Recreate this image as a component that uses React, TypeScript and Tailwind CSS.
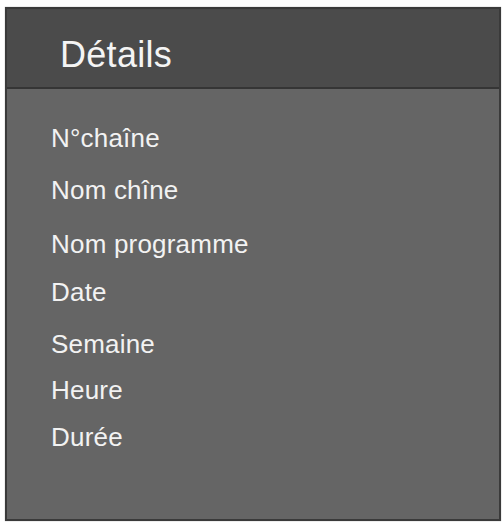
import React from "react";

const fields = [
  { label: "N°chaîne", gap: "mt-0" },
  { label: "Nom chîne", gap: "mt-[24px]" },
  { label: "Nom programme", gap: "mt-[26px]" },
  { label: "Date", gap: "mt-[20px]" },
  { label: "Semaine", gap: "mt-[24px]" },
  { label: "Heure", gap: "mt-[18px]" },
  { label: "Durée", gap: "mt-[19px]" },
];

export default function App() {
  return (
    <div className="w-[504px] h-[523px] bg-white pt-[7px] pl-[5px] pr-[3px] pb-[2px] font-['Liberation_Sans',Arial,sans-serif]">
      <div className="flex flex-col h-full border-2 border-[#3a3a3a] bg-[#656565] shadow-[0_0_1px_rgba(0,0,0,0.4)]">
        {/* Header bar */}
        <div className="h-[80px] shrink-0 bg-[#4b4b4b] border-b-2 border-[#353535] pl-[53px] pt-[26px]">
          <h2 className="text-[36px] leading-[40px] tracking-[0.3px] text-[#f4f4f4]">Détails</h2>
        </div>

        {/* Field list */}
        <ul className="flex flex-col pl-[44px] pt-[35px]">
          {fields.map((f) => (
            <li key={f.label} className={`${f.gap} text-[26px] leading-[28px] tracking-[0.2px] text-[#f2f2f2]`}>
              {f.label}
            </li>
          ))}
        </ul>
      </div>
    </div>
  );
}
